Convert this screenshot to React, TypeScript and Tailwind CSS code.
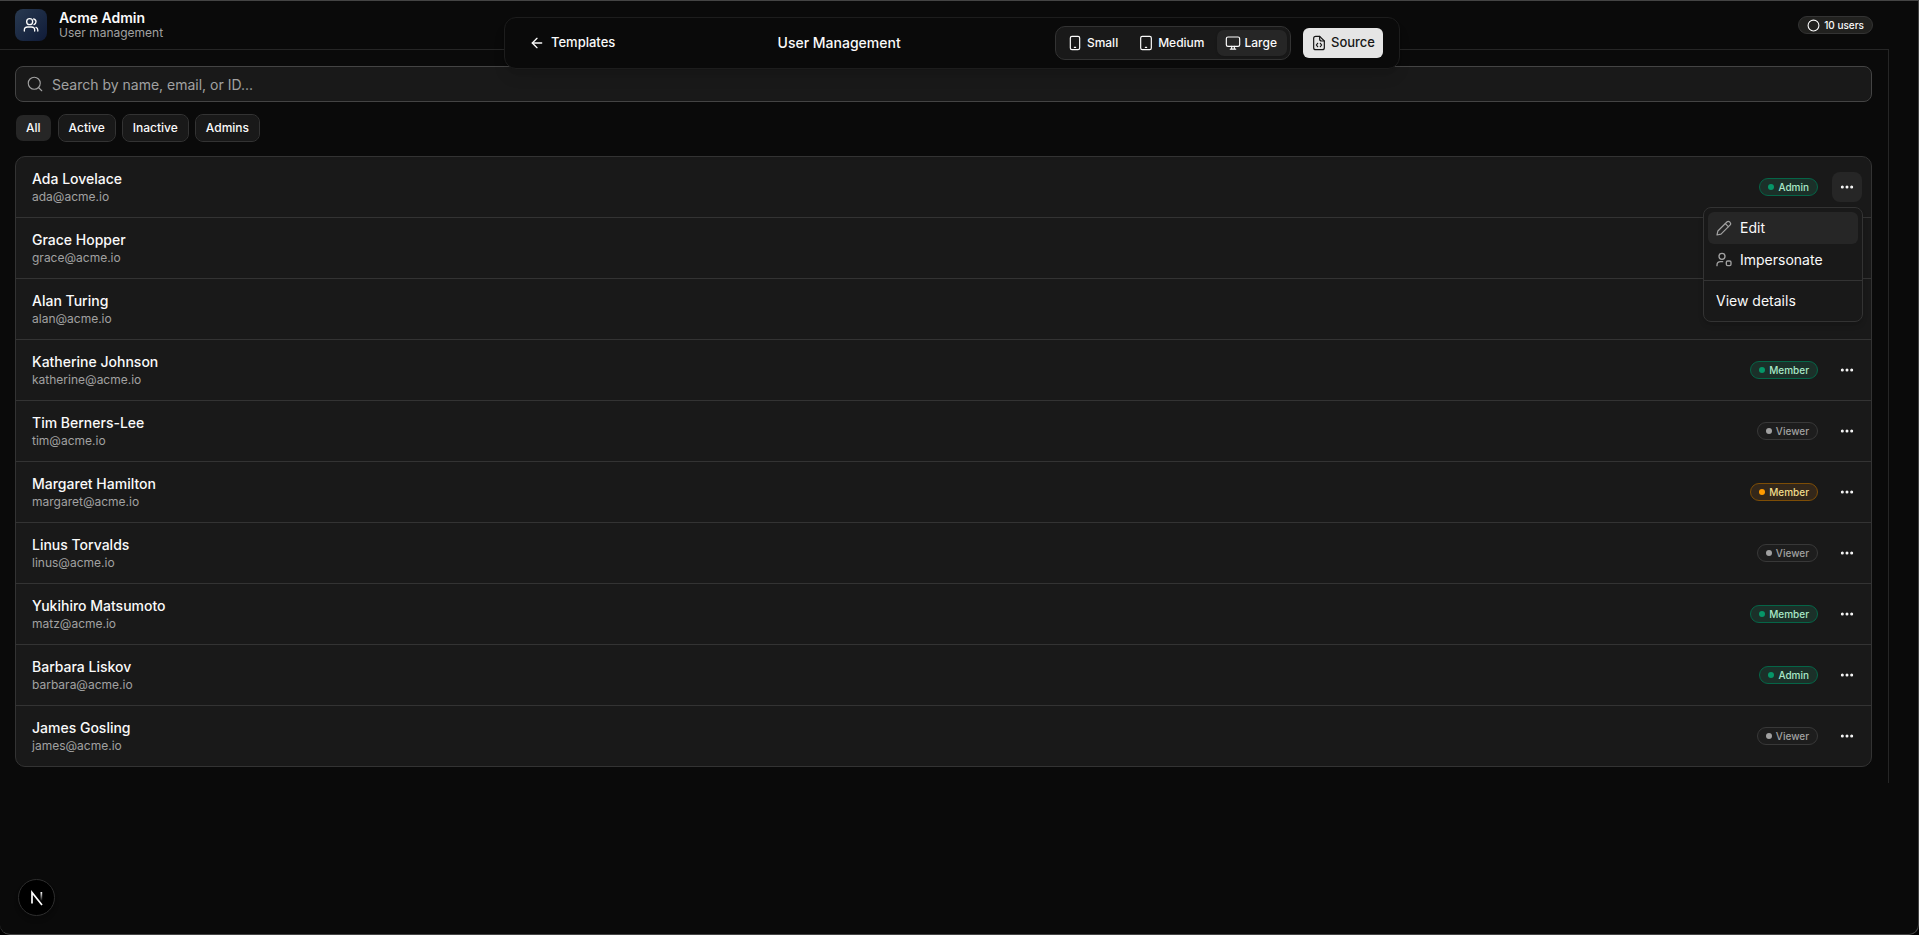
import React, { useState } from 'react';
import { ArrowLeft, Circle, Search, Ellipsis } from 'lucide-react';

type Status = 'active' | 'pending' | 'inactive';

const users: { name: string; email: string; role?: string; status: Status }[] = [
  { name: 'Ada Lovelace', email: 'ada@acme.io', role: 'Admin', status: 'active' },
  { name: 'Grace Hopper', email: 'grace@acme.io', status: 'active' },
  { name: 'Alan Turing', email: 'alan@acme.io', status: 'active' },
  { name: 'Katherine Johnson', email: 'katherine@acme.io', role: 'Member', status: 'active' },
  { name: 'Tim Berners-Lee', email: 'tim@acme.io', role: 'Viewer', status: 'inactive' },
  { name: 'Margaret Hamilton', email: 'margaret@acme.io', role: 'Member', status: 'pending' },
  { name: 'Linus Torvalds', email: 'linus@acme.io', role: 'Viewer', status: 'inactive' },
  { name: 'Yukihiro Matsumoto', email: 'matz@acme.io', role: 'Member', status: 'active' },
  { name: 'Barbara Liskov', email: 'barbara@acme.io', role: 'Admin', status: 'active' },
  { name: 'James Gosling', email: 'james@acme.io', role: 'Viewer', status: 'inactive' },
];

const badgeStyles: Record<Status, string> = {
  active: 'border-[#056547] bg-[#1b3029] text-[#a9e8c8]',
  pending: 'border-[#7d4d06] bg-[#33271a] text-[#f0dc8c]',
  inactive: 'border-[#383838] bg-[#1d1d1d] text-[#a1a1a1]',
};

const dotStyles: Record<Status, string> = {
  active: 'bg-[#069668]',
  pending: 'bg-[#fe9a00]',
  inactive: 'bg-[#a1a1a1]',
};

const Icon: React.FC<{ stroke?: number; className?: string; children: React.ReactNode }> = ({
  stroke = 1.8,
  className,
  children,
}) => (
  <svg
    width={16}
    height={16}
    viewBox="0 0 24 24"
    fill="none"
    stroke="currentColor"
    strokeWidth={stroke}
    strokeLinecap="round"
    strokeLinejoin="round"
    className={className}
    aria-hidden="true"
  >
    {children}
  </svg>
);

const UsersIcon = () => (
  <Icon stroke={2}>
    <circle cx="10" cy="7" r="4.5" />
    <path d="M16 3c2.3.5 3.5 2 3.5 4.2S18 10.7 16.5 11.3" />
    <path d="M2 21v-1.5C2 16.5 4.5 15 7 15h5.500c2.5 0 5 1.5 5 4.5V21" />
    <path d="M19.5 15.5c1.7.8 2.7 2.2 2.7 4V21" />
  </Icon>
);

const PhoneIcon = () => (
  <Icon>
    <rect x="5" y="2" width="14" height="20" rx="2.5" />
    <path d="M11 18.5h2" />
  </Icon>
);

const TabletIcon = () => (
  <Icon>
    <rect x="4" y="2" width="16" height="20" rx="2.5" />
    <path d="M11 18.5h2" />
  </Icon>
);

const MonitorIcon = () => (
  <Icon>
    <rect x="2" y="3" width="20" height="14" rx="2.5" />
    <path d="M10 17v4M14 17v4M8 21.2h8" />
  </Icon>
);

const SourceIcon = () => (
  <Icon>
    <path d="M13 2H7a3 3 0 0 0-3 3v14a3 3 0 0 0 3 3h10a3 3 0 0 0 3-3V9z" />
    <path d="M13 2v4a3 3 0 0 0 3 3h4" />
    <path d="M10 12.5 8 15l2 2.5M14 12.5l2 2.5-2 2.5" />
  </Icon>
);

const PencilIcon = () => (
  <Icon className="text-[#a1a1a1]">
    <path d="M1.500 22.500l1.300-6L16.300 3a3 3 0 0 1 4.200 0l.5.500a3 3 0 0 1 0 4.200L7.500 21.200z" />
    <path d="M14 5.500l4.500 4.500" />
  </Icon>
);

const ImpersonateIcon = () => (
  <Icon stroke={2} className="text-[#a1a1a1]">
    <circle cx="9" cy="6.5" r="4.500" />
    <path d="M1.500 20.500v-.8c0-3 2.300-5.200 5.200-5.200H10" />
    <rect x="15.500" y="13.500" width="7" height="7" rx="2" />
  </Icon>
);

const sizes = [
  { label: 'Small', icon: <PhoneIcon /> },
  { label: 'Medium', icon: <TabletIcon /> },
  { label: 'Large', icon: <MonitorIcon /> },
];

const filters = ['All', 'Active', 'Inactive', 'Admins'];

const Toolbar: React.FC = () => {
  const [size, setSize] = useState('Large');

  return (
    <nav className="absolute inset-x-0 top-4 z-20 mx-auto flex h-[52px] max-w-4xl items-center justify-between rounded-xl border border-[#1d1d1d] bg-[#0a0a0a] px-4 shadow-lg">
      <a href="#templates" className="flex items-center gap-1.5 px-2 text-[13px] font-medium">
        <ArrowLeft size={16} strokeWidth={2} />
        Templates
      </a>
      <h2 className="text-sm font-medium">User Management</h2>
      <div className="flex items-center gap-3">
        <div className="flex gap-0.5 rounded-[10px] border border-[#333] bg-[#191919] p-[3px]">
          {sizes.map((item) => (
            <button
              key={item.label}
              onClick={() => setSize(item.label)}
              className={`flex h-[26px] items-center gap-1 rounded-[7px] pl-2 pr-2.5 text-xs font-medium ${
                size === item.label ? 'bg-[#262626] shadow-sm' : ''
              }`}
            >
              {item.icon}
              {item.label}
            </button>
          ))}
        </div>
        <button className="flex h-[30px] items-center gap-1 rounded-md bg-[#e5e5e5] px-2 text-[13px] font-medium text-[#171717]">
          <SourceIcon />
          Source
        </button>
      </div>
    </nav>
  );
};

const UserMenu: React.FC = () => (
  <div role="menu" className="absolute -right-px top-full z-10 mt-[5px] w-40 rounded-lg border border-[#333] bg-[#191919] p-1 text-sm shadow-md">
    <button role="menuitem" className="flex h-8 w-full items-center gap-2 rounded-md bg-[#262626] px-2">
      <PencilIcon />
      Edit
    </button>
    <button role="menuitem" className="flex h-8 w-full items-center gap-2 rounded-md px-2">
      <ImpersonateIcon />
      Impersonate
    </button>
    <div role="separator" className="-mx-1 my-1 h-px bg-[#333]" />
    <button role="menuitem" className="flex h-8 w-full items-center rounded-md px-2">
      View details
    </button>
  </div>
);

const App: React.FC = () => {
  const [filter, setFilter] = useState('All');
  const [openMenu, setOpenMenu] = useState<string | null>('ada@acme.io');

  return (
    <div className="min-h-screen bg-black font-['Inter',sans-serif] text-[#fafafa] antialiased">
      <div className="relative flex min-h-screen flex-col overflow-hidden rounded-b-[10px] border-r border-y border-[#444] bg-[#0a0a0a]">
        <div className="relative mr-3.5">
          <Toolbar />
          <div className="mr-[15px]">
            <header className="flex h-[49px] items-center justify-between border-b border-[#262626] pl-[15px] pr-4">
              <div className="flex items-center gap-3">
                <div className="flex size-8 items-center justify-center rounded-lg bg-linear-to-br from-[#293a50] to-[#101b38]">
                  <UsersIcon />
                </div>
                <div>
                  <h1 className="text-sm leading-4 font-semibold">Acme Admin</h1>
                  <p className="text-xs leading-[14px] text-[#a1a1a1]">User management</p>
                </div>
              </div>
              <span className="flex h-[18px] items-center gap-1 rounded-full border border-[#333] bg-[#21211f] px-2 text-[10px] font-medium">
                <Circle size={13} strokeWidth={2} />
                10 users
              </span>
            </header>

            <main className="border-r border-[#262626] py-4 pl-[15px] pr-4">
              <label className="flex h-9 items-center gap-2 rounded-lg border border-[#444] bg-[#191919] px-2.5">
                <Search size={18} strokeWidth={1.5} className="text-[#a1a1a1]" />
                <input
                  type="text"
                  aria-label="Search users"
                  placeholder="Search by name, email, or ID..."
                  className="flex-1 bg-transparent pt-0.5 text-sm outline-none placeholder:text-[#a1a1a1]"
                />
              </label>

              <div className="mt-3 mb-3.5 flex gap-1.5">
                {filters.map((item) => (
                  <button
                    key={item}
                    onClick={() => setFilter(item)}
                    className={`h-7 rounded-lg border bg-clip-padding px-2.5 text-xs font-medium ${
                      filter === item ? 'border-transparent bg-[#262626]' : 'border-[#333] bg-[#191919]'
                    }`}
                  >
                    {item}
                  </button>
                ))}
              </div>

              <ul className="divide-y divide-[#333] rounded-[10px] border border-[#333] bg-[#191919]">
                {users.map((user) => (
                  <li key={user.email} className="flex items-center justify-between py-3 pl-4 pr-[9px]">
                    <div>
                      <p className="text-sm font-medium">{user.name}</p>
                      <p className="text-xs text-[#a1a1a1]">{user.email}</p>
                    </div>
                    <div className="flex items-center gap-3.5">
                      {user.role && (
                        <span
                          className={`flex h-[18px] items-center gap-1 rounded-full border px-2 text-[10px] font-medium ${badgeStyles[user.status]}`}
                        >
                          <span className={`size-1.5 rounded-full ${dotStyles[user.status]}`} />
                          {user.role}
                        </span>
                      )}
                      <div className="relative">
                        <button
                          aria-label={`Actions for ${user.name}`}
                          onClick={() => setOpenMenu(openMenu === user.email ? null : user.email)}
                          className={`flex size-[30px] items-center justify-center rounded-lg ${
                            openMenu === user.email ? 'bg-[#262626]' : ''
                          }`}
                        >
                          <Ellipsis size={16} strokeWidth={2.5} />
                        </button>
                        {openMenu === user.email && <UserMenu />}
                      </div>
                    </div>
                  </li>
                ))}
              </ul>
            </main>
          </div>
        </div>

        <button
          aria-label="Open developer tools"
          className="absolute bottom-[18px] left-[18px] flex size-[37px] items-center justify-center rounded-full border border-[#2e2e2e] bg-black shadow-md"
        >
          <svg width="14" height="16" viewBox="0 0 14 16" fill="none" aria-hidden="true">
            <defs>
              <linearGradient id="stem" x1="0" y1="0" x2="0" y2="1">
                <stop offset="0" stopColor="#fff" />
                <stop offset="1" stopColor="#fff" stopOpacity="0" />
              </linearGradient>
            </defs>
            <path d="M2 13.5V2.5L12 15" stroke="#fff" strokeWidth="1.7" />
            <rect x="10.5" y="2" width="1.7" height="9" fill="url(#stem)" />
          </svg>
        </button>
      </div>
    </div>
  );
};

export default App;
